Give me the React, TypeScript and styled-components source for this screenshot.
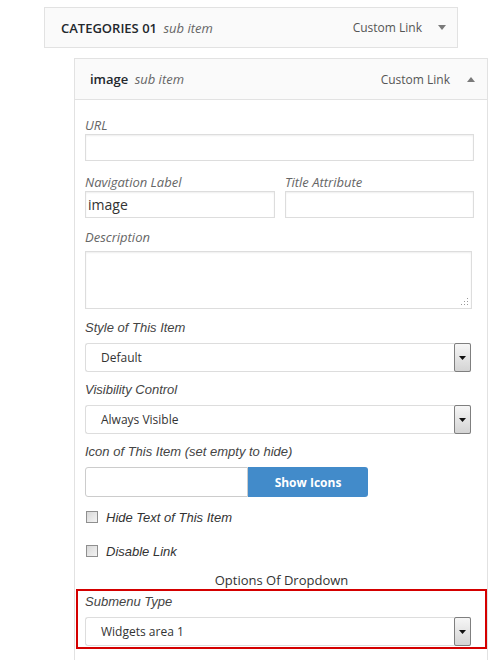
import React from 'react';
import styled, {createGlobalStyle} from 'styled-components';

const GlobalStyle = createGlobalStyle`
  body {
    margin: 0;
    background: #fff;
    font-family: "Open Sans", "Liberation Sans", sans-serif;
    color: #333;
  }
`

const Arrow: React.FC<{up?: boolean}> = ({up}) => (
  <svg width="8" height="5" viewBox="0 0 8 5">
    {up
      ? <polygon points="0,5 8,5 4,0" fill="#7a7a7a" />
      : <polygon points="0,0 8,0 4,5" fill="#7a7a7a" />}
  </svg>
)

const Grip = () => (
  <svg width="8" height="8" viewBox="0 0 8 8">
    <rect x="6" y="0" width="1" height="1" fill="#999" />
    <rect x="3" y="3" width="1" height="1" fill="#999" />
    <rect x="6" y="3" width="1" height="1" fill="#999" />
    <rect x="0" y="6" width="1" height="1" fill="#999" />
    <rect x="3" y="6" width="1" height="1" fill="#999" />
    <rect x="6" y="6" width="1" height="1" fill="#999" />
  </svg>
)

const Select: React.FC<{value: string}> = ({value}) => (
  <SelectBox>
    <span>{value}</span>
    <SelectButton>
      <svg width="7" height="4" viewBox="0 0 7 4">
        <polygon points="0,0 7,0 3.5,4" fill="#111" />
      </svg>
    </SelectButton>
  </SelectBox>
)

const App = () => {
  return (
    <>
      <GlobalStyle />
      <Wrap>
        <Header $width={414}>
          <Title>CATEGORIES 01 <SubLabel>sub item</SubLabel></Title>
          <Controls $gap={16}>
            <ItemType>Custom Link</ItemType>
            <Arrow />
          </Controls>
        </Header>

        <SubItem>
          <Header>
            <Title>image <SubLabel>sub item</SubLabel></Title>
            <Controls $gap={17}>
              <ItemType>Custom Link</ItemType>
              <Arrow up />
            </Controls>
          </Header>

          <Body>
            <WpField>
              <WpLabel>URL</WpLabel>
              <TextInput />
            </WpField>

            <Row>
              <WpField>
                <WpLabel>Navigation Label</WpLabel>
                <TextInput>image</TextInput>
              </WpField>
              <WpField>
                <WpLabel>Title Attribute</WpLabel>
                <TextInput />
              </WpField>
            </Row>

            <WpField $mb={0}>
              <WpLabel $mb={6}>Description</WpLabel>
              <TextArea><Grip /></TextArea>
            </WpField>

            <Field $mt={11}>
              <FieldLabel>Style of This Item</FieldLabel>
              <Select value="Default" />
            </Field>

            <Field>
              <FieldLabel>Visibility Control</FieldLabel>
              <Select value="Always Visible" />
            </Field>

            <Field>
              <FieldLabel>Icon of This Item (set empty to hide)</FieldLabel>
              <IconRow>
                <IconInput />
                <BlueButton>Show Icons</BlueButton>
              </IconRow>
            </Field>

            <CheckRow $mt={10}>
              <CheckBox />
              <CheckText>Hide Text of This Item</CheckText>
            </CheckRow>
            <CheckRow $mt={14}>
              <CheckBox />
              <CheckText>Disable Link</CheckText>
            </CheckRow>

            <SectionTitle>Options Of Dropdown</SectionTitle>

            <Highlight>
              <FieldLabel>Submenu Type</FieldLabel>
              <Select value="Widgets area 1" />
            </Highlight>
          </Body>
        </SubItem>
      </Wrap>
    </>
  )
}

const Wrap = styled.div`
  padding: 7px 0 0 44px;
`

const Header = styled.div<{$width?: number}>`
  box-sizing: border-box;
  width: ${p => p.$width ? p.$width + 'px' : 'auto'};
  height: 41px;
  display: flex;
  align-items: center;
  justify-content: space-between;
  padding: 0 11px 0 16px;
  background: #fafafa;
  border: 1px solid #e2e2e2;
`

const SubItem = styled.div`
  box-sizing: border-box;
  width: 414px;
  height: 610px;
  margin: 10px 0 0 30px;
  border: 1px solid #e2e2e2;
  border-bottom: none;

  ${Header} {
    border: none;
    border-bottom: 1px solid #e2e2e2;
    padding: 0 12px 0 15px;
  }
`

const Title = styled.div`
  font-size: 13px;
  font-weight: 600;
  color: #23282d;
  white-space: nowrap;
`

const SubLabel = styled.span`
  margin-left: 3px;
  font-weight: 400;
  font-style: italic;
  color: #666;
`

const Controls = styled.div<{$gap: number}>`
  display: flex;
  align-items: center;
  gap: ${p => p.$gap}px;
`

const ItemType = styled.span`
  font-size: 12px;
  color: #555;
`

const Body = styled.div`
  display: flex;
  flex-direction: column;
  padding: 18px 13px 0 10px;
`

const WpField = styled.div<{$mb?: number}>`
  display: flex;
  flex-direction: column;
  margin-bottom: ${p => p.$mb ?? 12}px;
`

const WpLabel = styled.label<{$mb?: number}>`
  font-size: 13px;
  line-height: 15px;
  font-style: italic;
  color: #666;
  margin-bottom: ${p => p.$mb ?? 1}px;
`

const TextInput = styled.div`
  box-sizing: border-box;
  height: 27px;
  padding: 0 2px;
  border: 1px solid #ddd;
  box-shadow: inset 0 1px 2px rgba(0, 0, 0, 0.07);
  background: #fff;
  font-size: 14px;
  line-height: 25px;
  color: #333;
`

const Row = styled.div`
  display: grid;
  grid-template-columns: 190px 189px;
  column-gap: 10px;
  margin-top: 2px;
`

const TextArea = styled.div`
  box-sizing: border-box;
  width: 387px;
  height: 58px;
  display: flex;
  align-items: flex-end;
  justify-content: flex-end;
  padding: 0 2px 2px 0;
  border: 1px solid #ddd;
  box-shadow: inset 0 1px 2px rgba(0, 0, 0, 0.07);
  background: #fff;
`

const Field = styled.div<{$mt?: number}>`
  display: flex;
  flex-direction: column;
  margin-top: ${p => p.$mt ?? 10}px;
`

const FieldLabel = styled.label`
  font-family: "Liberation Sans", Arial, sans-serif;
  font-size: 13px;
  line-height: 15px;
  font-style: italic;
  color: #444;
  margin-bottom: 8px;
`

const SelectBox = styled.div`
  box-sizing: border-box;
  width: 386px;
  height: 29px;
  display: flex;
  align-items: center;
  justify-content: space-between;
  padding-left: 15px;
  border: 1px solid #ddd;
  border-right: none;
  border-radius: 3px 0 0 3px;
  background: #fff;
  font-size: 12px;
  color: #333;
`

const SelectButton = styled.div`
  box-sizing: border-box;
  width: 17px;
  height: 29px;
  display: flex;
  align-items: center;
  justify-content: center;
  border: 1px solid #7f7f7f;
  border-radius: 2px;
  background: linear-gradient(#f6f6f6, #d4d4d4);
`

const IconRow = styled.div`
  display: flex;
  height: 30px;
`

const IconInput = styled.div`
  box-sizing: border-box;
  width: 163px;
  border: 1px solid #ccc;
  border-radius: 3px 0 0 3px;
  background: #fff;
`

const BlueButton = styled.div`
  width: 120px;
  display: flex;
  align-items: center;
  justify-content: center;
  background: #428bca;
  border-radius: 0 3px 3px 0;
  color: #fff;
  font-size: 12px;
  font-weight: 700;
`

const CheckRow = styled.div<{$mt: number}>`
  display: flex;
  align-items: center;
  height: 20px;
  margin-top: ${p => p.$mt}px;
  padding-left: 1px;
  gap: 8px;
`

const CheckBox = styled.span`
  box-sizing: border-box;
  width: 12px;
  height: 12px;
  border: 1px solid #8f8f8f;
  background: linear-gradient(135deg, #d8d8d8, #f4f4f4);
`

const CheckText = styled.span`
  font-family: "Liberation Sans", Arial, sans-serif;
  font-size: 13px;
  font-style: italic;
  color: #333;
`

const SectionTitle = styled.div`
  margin-top: 10px;
  text-align: center;
  font-size: 13px;
  line-height: 18px;
  color: #333;
  padding-left: 4px;
`

const Highlight = styled.div`
  display: flex;
  flex-direction: column;
  margin: 0 -13px 0 -9px;
  padding: 3px 14px 1px 7px;
  border: 2px solid #d40000;
`

export default App;
